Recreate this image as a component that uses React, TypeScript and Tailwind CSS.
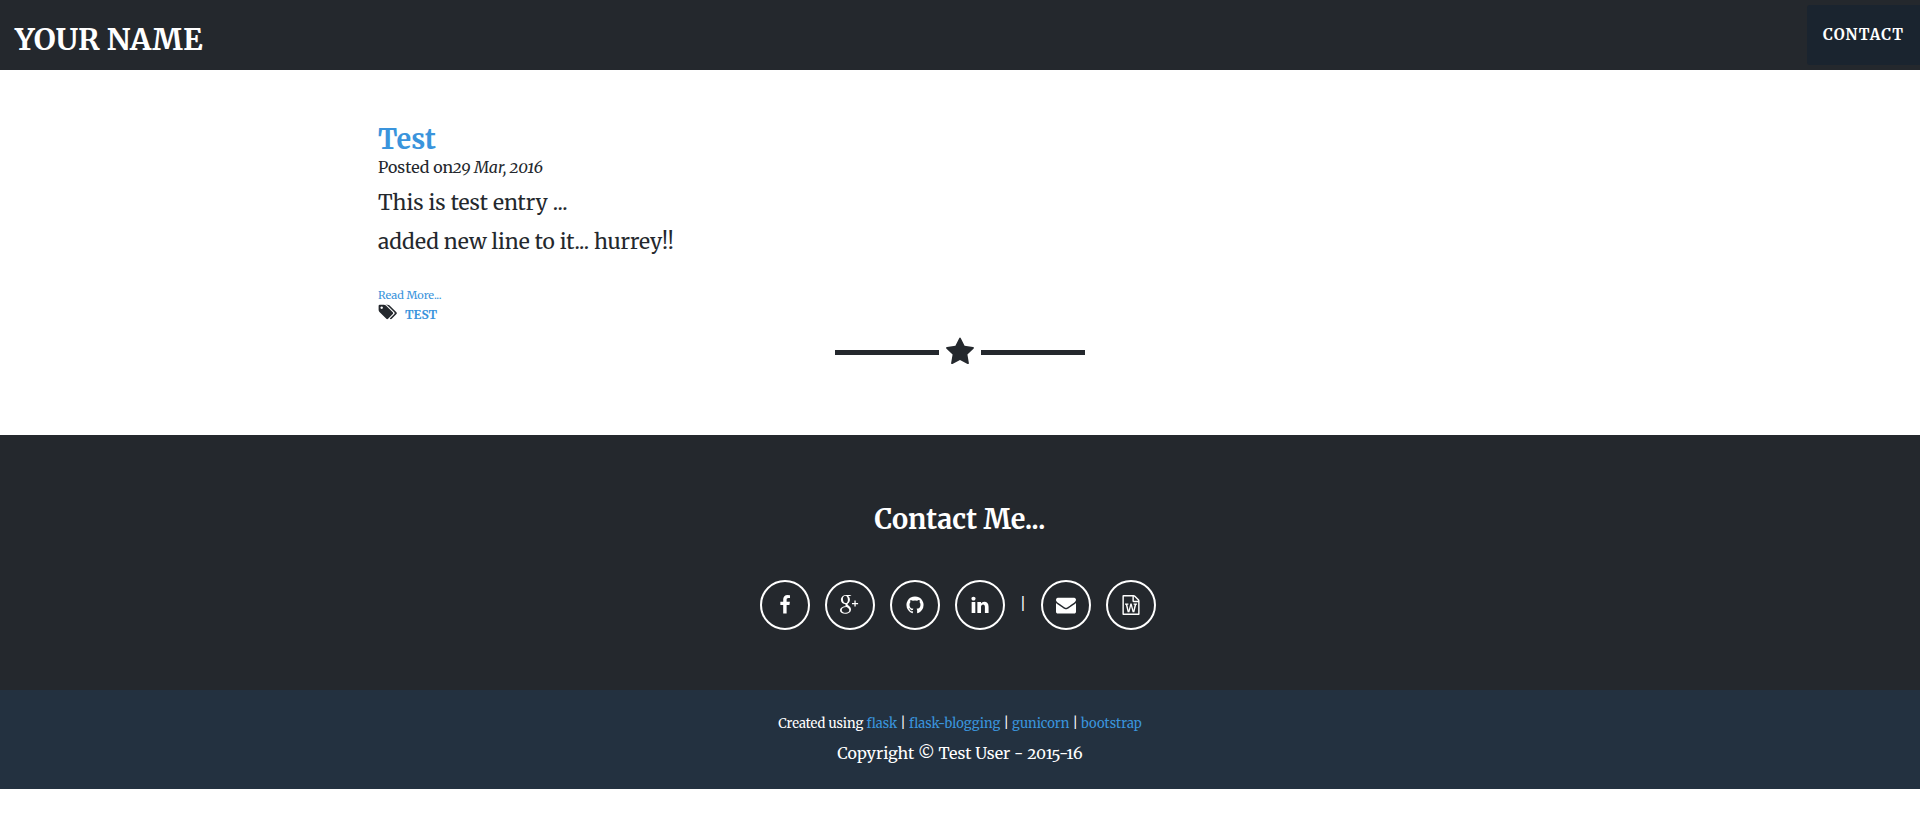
import React from "react";

type GlyphProps = { d: string; className: string; viewBox?: string };

function Glyph({ d, className, viewBox = "0 0 1792 1792" }: GlyphProps) {
  return (
    <svg viewBox={viewBox} className={className} fill="currentColor" aria-hidden="true">
      <path d={d} />
    </svg>
  );
}

const STAR =
  "M1728 647q0 22-26 48l-363 354 86 500q1 7 1 20 0 21-10.5 35.5t-30.5 14.5q-19 0-40-12l-449-236-449 236q-22 12-40 12-21 0-31.5-14.5t-10.5-35.5q0-6 2-20l86-500-364-354q-25-27-25-48 0-37 56-46l502-73 225-455q19-41 49-41t49 41l225 455 502 73q56 9 56 46z";
const TAGS =
  "M576 448q0-53-37.5-90.5t-90.5-37.5-90.5 37.5-37.5 90.5 37.5 90.5 90.5 37.5 90.5-37.5 37.5-90.5zm1067 576q0 53-37 90l-491 492q-39 37-91 37-53 0-90-37l-715-716q-38-37-64.5-101t-26.5-117v-416q0-52 38-90t90-38h416q53 0 117 26.5t102 64.5l715 714q37 39 37 91zm384 0q0 53-37 90l-491 492q-39 37-91 37-36 0-59-14t-53-45l470-470q37-37 37-90 0-52-37-91l-715-714q-38-38-102-64.5t-117-26.5h224q53 0 117 26.5t102 64.5l715 714q37 39 37 91z";
const FACEBOOK =
  "M1343 12v264h-157q-86 0-116 36t-30 108v189h293l-39 296h-254v759h-306v-759h-255v-296h255v-218q0-186 104-288.5t277-102.5q147 0 228 12z";
const GITHUB =
  "M896 128q209 0 385.5 103t279.5 279.5 103 385.5q0 251-146.5 451.5t-378.5 277.5q-27 5-40-7t-13-30q0-3 .5-76.5t.5-134.5q0-97-52-142 57-6 102.5-18t94-39 81-66.5 53-105 20.5-150.5q0-119-79-206 37-91-8-204-28-9-81 11t-92 44l-38 24q-93-26-192-26t-192 26q-16-11-42.5-27t-83.5-38.5-85-13.5q-45 113-8 204-79 87-79 206 0 85 20.5 150t52.5 105 80.5 67 94 39 102.5 18q-39 36-49 103-21 10-45 15t-57 5-65.5-21.5-55.5-62.5q-19-32-48.5-52t-49.5-24l-20-3q-21 0-29 4.5t-5 11.5 9 14 13 12l7 5q22 10 43.5 38t31.5 51l10 23q13 38 44 61.5t67 30 69.5 7 55.5-3.5l23-4q0 38 .5 88.5t.5 54.5q0 18-13 30t-40 7q-232-77-378.5-277.5t-146.5-451.5q0-209 103-385.5t279.5-279.5 385.5-103z";
const LINKEDIN =
  "M477 625v991h-330v-991h330zm21-306q1 73-50.5 122t-135.5 49h-2q-82 0-132-49t-50-122q0-74 51.5-122.5t134.5-48.5 133 48.5 51 122.5zm1166 729v568h-329v-530q0-105-40.5-164.5t-126.5-59.5q-63 0-105.5 34.5t-63.5 85.5q-11 30-11 81v553h-329q2-399 2-647t-1-296l-1-48h329v144h-2q20-32 41-56t56.5-52 87-43.5 114.5-15.5q171 0 275 113.5t104 332.5z";
const ENVELOPE =
  "M1792 710v794q0 66-47 113t-113 47h-1472q-66 0-113-47t-47-113v-794q44 49 101 87 362 246 497 345 57 42 92.5 65.5t94.5 48 110 24.5h2q51 0 110-24.5t94.5-48 92.5-65.5q170-123 498-345 57-39 100-87zm0-294q0 79-49 151t-122 123q-376 261-468 325-10 7-42.5 31t-54 38.5-52 32.5-57.5 27-50 9h-2q-23 0-50-9t-57.5-27-52-32.5-54-38.5-42.5-31q-91-64-262-182.5t-205-142.5q-62-42-117-115.5t-55-136.5q0-78 41.5-130t118.5-52h1472q65 0 112.5 47t47.5 113z";
const WORD =
  "M1596 380q28 28 48 76t20 88v1152q0 40-28 68t-68 28h-1344q-40 0-68-28t-28-68v-1600q0-40 28-68t68-28h896q40 0 88 20t76 48zm-444-244v376h376q-10-29-22-41l-313-313q-12-12-41-22zm384 1528v-1024h-416q-40 0-68-28t-28-68v-416h-768v1536h1280zm-1175-896v107h70l164 661h159l128-485q7-20 10-46 2-16 2-24h4l3 24q1 3 3.5 20t5.5 26l128 485h159l164-661h70v-107h-300v107h90l-99 438q-5 20-7 46l-2 21h-4q0-3-.5-6.5t-1.5-8-1-6.5q-1-5-4-21t-5-25l-144-545h-114l-144 545q-2 9-4.5 24.5t-3.5 21.5l-4 21h-4l-2-21q-2-26-7-46l-99-438h90v-107h-300z";

function GooglePlus() {
  return (
    <svg viewBox="0 0 20 20" className="size-5" fill="currentColor" aria-hidden="true">
      <path
        fillRule="evenodd"
        d="M11.500 0H6C3 0 .9 2.200.9 4.800c0 2.500 1.900 4.400 4.700 4.400-.5 1 0 1.600.4 2C2.500 11.300 0 12.900 0 15.200c0 2.200 2.100 3.600 5.200 3.600 3.500 0 5.800-1.900 5.800-4.300 0-1.900-1-2.900-2.800-4.200-.9-.7-.9-1.200 0-2 1-.8 1.700-2 1.700-3.600 0-1.600-.7-2.900-1.700-3.700h1.800zM5.300.8c1.500 0 2.600 2 2.600 4.200 0 1.900-.8 3.100-2.200 3.100C4 8.100 2.900 6 2.900 3.900 2.900 2.100 3.800.8 5.300.8zM6.600 12c1.700 1.100 2.700 1.800 2.700 3.300 0 1.500-1.300 2.500-3.500 2.500-2.500 0-4.100-1.200-4.100-2.900C1.700 13 3.600 12 6.600 12z"
      />
      <path d="M14.400 5.500h1.300v2.400h2.400v1.300h-2.400v2.400h-1.300V9.200H12V7.900h2.400z" />
    </svg>
  );
}

function SocialLink({ label, children }: { label: string; children: React.ReactNode }) {
  return (
    <a
      href="#contact"
      aria-label={label}
      className="flex size-[50px] items-center justify-center rounded-full border-2 border-white text-white"
    >
      {children}
    </a>
  );
}

const credits = ["flask", "flask-blogging", "gunicorn", "bootstrap"];

export default function App() {
  return (
    <div className="bg-white font-['Merriweather','DejaVu_Serif_Condensed','DejaVu_Serif',serif] text-[#24282d] oldstyle-nums">
      <header className="flex items-center justify-between bg-[#24282d] py-[5px] pl-[15px] text-white">
        <a href="#top" className="pt-2 text-[30px] leading-9 font-bold">YOUR NAME</a>
        <nav>
          <a
            href="#contact"
            className="flex h-[60px] items-center rounded-l-[3px] bg-[#1a242f] px-4 text-[15px] font-bold tracking-[1px]"
          >
            CONTACT
          </a>
        </nav>
      </header>

      <main className="mx-auto max-w-[1170px] px-[3px] pt-[52px] pb-[68px]">
        <article>
          <h1 className="text-[27px] leading-[34px] font-bold">
            <a href="#test" className="text-[#3a94dc]">Test</a>
          </h1>
          <p className="text-[16px] leading-[22px]">
            Posted on<em>29 Mar, 2016</em>
          </p>
          <div className="pt-[5px] text-[21px] leading-[39px]">
            <p>This is test entry ...</p>
            <p>added new line to it... hurrey!!</p>
          </div>
          <p className="pt-[25px] text-[11px] leading-[18px]">
            <a href="#test" className="text-[#3a94dc]">Read More...</a>
          </p>
          <p className="flex items-start text-[12px] leading-[21px] font-bold">
            <Glyph d={TAGS} viewBox="64 128 1984 1536" className="mr-2 h-4 w-[19px]" />
            <a href="#tag" className="text-[#3a94dc]">TEST</a>
          </p>
        </article>
        <div className="mt-3 flex items-center justify-center gap-[6px]">
          <span className="h-[5px] w-[104px] bg-[#24282d]" />
          <Glyph d={STAR} className="size-[30px]" />
          <span className="h-[5px] w-[104px] bg-[#24282d]" />
        </div>
      </main>

      <section id="contact" className="bg-[#24282d] pt-[66px] pb-[60px] text-center text-white">
        <h2 className="text-[27px] leading-9 font-bold">Contact Me...</h2>
        <div className="mt-[43px] mr-1 flex items-center justify-center gap-[15px]">
          <SocialLink label="Facebook"><Glyph d={FACEBOOK} className="size-5" /></SocialLink>
          <SocialLink label="Google Plus"><GooglePlus /></SocialLink>
          <SocialLink label="GitHub"><Glyph d={GITHUB} className="size-5" /></SocialLink>
          <SocialLink label="LinkedIn"><Glyph d={LINKEDIN} className="size-5" /></SocialLink>
          <span className="text-[15px]">|</span>
          <SocialLink label="Email"><Glyph d={ENVELOPE} className="size-5" /></SocialLink>
          <SocialLink label="Resume"><Glyph d={WORD} className="size-5" /></SocialLink>
        </div>
      </section>

      <footer className="bg-[#233140] pt-5 pb-5 text-center text-white">
        <p className="text-[13px] leading-[27px]">
          Created using{" "}
          {credits.map((name, i) => (
            <React.Fragment key={name}>
              {i > 0 && " | "}
              <a href={"#" + name} className="text-[#3a94dc]">{name}</a>
            </React.Fragment>
          ))}
        </p>
        <p className="text-[16px] leading-[32px]">Copyright © Test User - 2015-16</p>
      </footer>
    </div>
  );
}
